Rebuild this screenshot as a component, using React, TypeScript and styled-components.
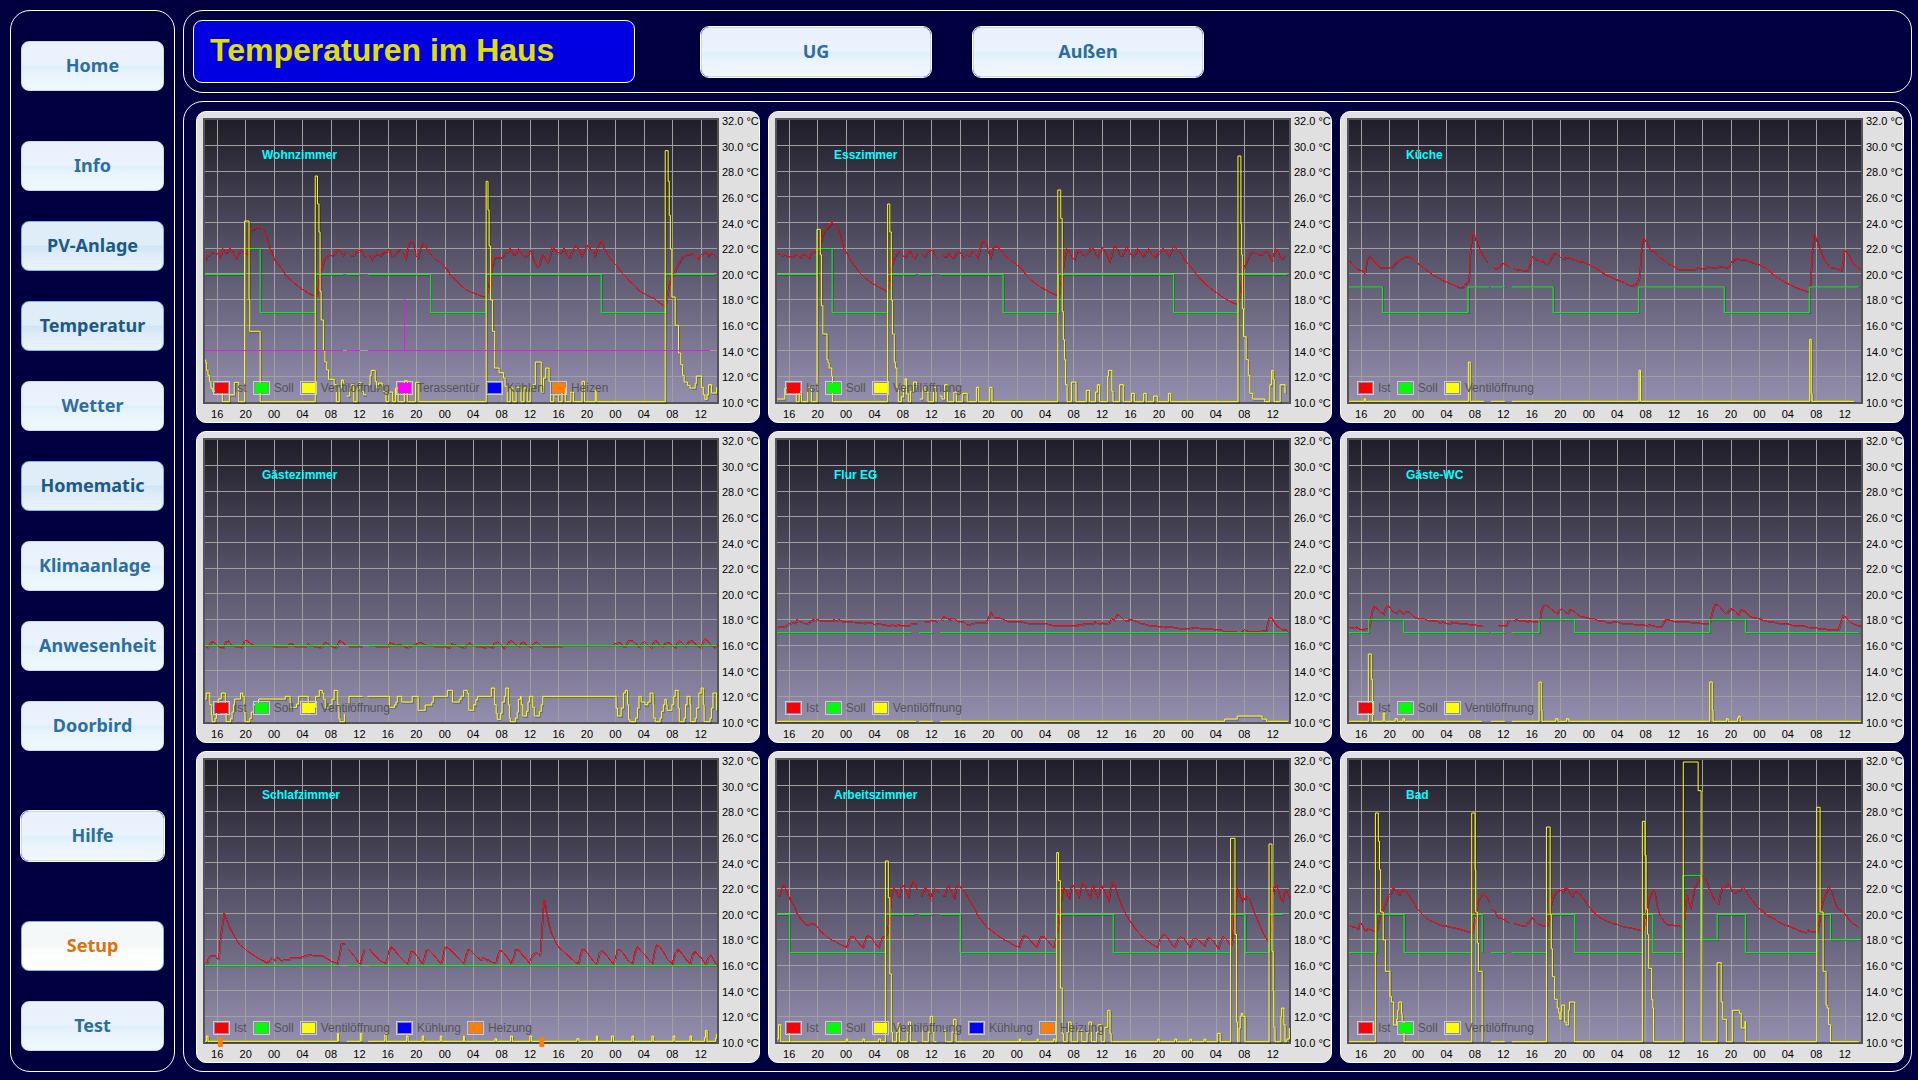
import React from 'react';
import styled, { createGlobalStyle, css } from 'styled-components';

const GlobalStyle = createGlobalStyle`
  *, *::before, *::after { box-sizing: border-box; }
  body {
    margin: 0;
    background: #000040;
    font-family: "Liberation Sans", Arial, sans-serif;
  }
`;

const Page = styled.div`
  display: grid;
  grid-template-columns: 165px minmax(0, 1fr);
  gap: 8px;
  min-height: 100vh;
  padding: 10px 6px 8px 10px;
`;

const frame = css`
  border: 1px solid #ffffff;
  border-radius: 20px;
`;

const Sidebar = styled.nav`
  ${frame}
  display: flex;
  flex-direction: column;
  gap: 60px;
  padding: 30px 10px 20px;
`;

const NavGroup = styled.div`
  display: flex;
  flex-direction: column;
  gap: 30px;

  &:first-child { margin-bottom: -10px; }
`;

const Main = styled.main`
  display: flex;
  flex-direction: column;
  gap: 8px;
  min-width: 0;
`;

const Header = styled.header`
  ${frame}
  display: flex;
  align-items: center;
  gap: 42px;
  padding: 9px;
`;

const Title = styled.h1`
  flex: 0 0 442px;
  height: 63px;
  margin: 0 24px 0 0;
  padding: 0 16px;
  border: 1px solid #ffffff;
  border-radius: 9px;
  background: #0000e0;
  color: #e0e000;
  font-size: 32px;
  font-weight: bold;
  line-height: 58px;
`;

type Tone = 'normal' | 'strong' | 'active';

const tones = {
  normal: css`
    border-color: #c5dbec;
    color: #2e6e9e;
    background: linear-gradient(#e9f2fc 0%, #eaf3fd 48%, #dfeffb 51%, #e8f4fd 66%, #eff7ff 100%);
  `,
  strong: css`
    border-color: #79b7e7;
    color: #1d5987;
    background: linear-gradient(#dfedf9 0%, #dfedf8 48%, #d0e5f3 51%, #deecf7 66%, #e9f2fa 100%);
  `,
  active: css`
    border-color: #79b7e7;
    color: #e17009;
    background: linear-gradient(#f5f8f9 0%, #f5f8f9 48%, #fbfdfd 60%, #ffffff 100%);
  `,
};

const NavButton = styled.a<{ $tone?: Tone; $outlined?: boolean; $wide?: boolean }>`
  display: block;
  width: ${(p) => (p.$wide ? '230px' : 'auto')};
  height: 50px;
  padding: 0 17px;
  border: 1px solid;
  border-radius: 8px;
  font-family: "Noto Sans", "Open Sans", sans-serif;
  font-size: 18px;
  font-weight: 700;
  line-height: 46px;
  text-align: center;
  text-decoration: none;
  white-space: nowrap;
  ${(p) => tones[p.$tone ?? 'normal']}
  ${(p) => p.$outlined && css`box-shadow: 0 0 0 1px #ffffff;`}
`;

const Board = styled.section`
  ${frame}
  display: grid;
  grid-template-columns: repeat(3, minmax(0, 1fr));
  gap: 8px;
  padding: 9px 7px 8px 12px;
`;

const Card = styled.figure`
  display: grid;
  grid-template-columns: minmax(0, 1fr) 40px;
  grid-template-rows: auto 18px;
  margin: 0;
  padding: 6px 0 0 6px;
  border: 1px solid #ffffff;
  border-radius: 10px;
  background: #e0e0e0;
  color: #000000;
  font-size: 11px;
`;

const Plot = styled.div`
  position: relative;
  height: 286px;
  border: 2px solid #545454;
  background: linear-gradient(#201e2a, #948eae);
`;

const Canvas = styled.svg`
  display: block;
  width: 100%;
  height: 100%;
  overflow: visible;
`;

const Grid = styled.path`
  fill: none;
  stroke: #a0a0a0;
  stroke-width: 1;
  shape-rendering: crispEdges;
  vector-effect: non-scaling-stroke;
`;

const Trace = styled.path<{ $color: string; $smooth?: boolean }>`
  fill: none;
  stroke: ${(p) => p.$color};
  stroke-width: 1;
  shape-rendering: ${(p) => (p.$smooth ? 'auto' : 'crispEdges')};
  vector-effect: non-scaling-stroke;
`;

const Room = styled.figcaption`
  position: absolute;
  top: 28px;
  left: 57px;
  color: #00ffff;
  font-size: 12px;
  font-weight: bold;
  line-height: 14px;
`;

const Legend = styled.ul`
  position: absolute;
  bottom: 7px;
  left: 8px;
  display: flex;
  gap: 6px;
  margin: 0;
  padding: 0;
  list-style: none;
  color: #545454;
  font-size: 12px;
  line-height: 14px;
`;

const LegendItem = styled.li`
  display: flex;
  gap: 4px;
`;

const Swatch = styled.span<{ $color: string }>`
  width: 17px;
  height: 14px;
  padding: 1px;
  border: 1px solid #cccccc;
  background: ${(p) => p.$color} content-box;
`;

const Degrees = styled.div`
  display: flex;
  flex-direction: column;
  justify-content: space-between;
  margin: -3px 0 -5px;
  padding-left: 3px;
  line-height: 12px;
  white-space: nowrap;
`;

const Hours = styled.div`
  display: grid;
  grid-template-columns: repeat(18, minmax(0, 1fr));
  padding: 4px 4px 0 0;
  line-height: 12px;
  text-align: center;
`;

/* Recorder units: 45 is 32 °C, 891 is 10 °C; a window of 72 h is `span` units wide. */
const TOP = 45;
const BOTTOM = 891;

const RED = '#f00810';
const GREEN = '#00ff10';
const YELLOW = '#ffff00';
const ORANGE = '#ff8000';

type Entry = [label: string, color: string];

const basicLegend: Entry[] = [
  ['Ist', '#ff0000'],
  ['Soll', '#00ff00'],
  ['Ventilöffnung', '#ffff00'],
];
const climateLegend: Entry[] = [...basicLegend, ['Kühlung', '#0000ff'], ['Heizung', ORANGE]];

interface RoomData {
  name: string;
  origin: number;
  span: number;
  legend: Entry[];
  ist: string;
  soll: string;
  valve: string;
  door?: string;
  heating?: number[];
}

const rooms: RoomData[] = [
  {
    name: 'Wohnzimmer',
    origin: 41,
    span: 1384,
    legend: [...basicLegend, ['Terassentür', '#ff00ff'], ['Kühlen', '#0000ff'], ['Heizen', ORANGE]],
    ist: 'M41 466L47 452 53 449 58 443 66 443 72 446 78 445 80 458 86 440 89 428 93 444 101 440 108 430 114 436 119 452 124 460 129 449 137 434 143 440 150 444 155 450 158 430 160 380 164 373 170 373 176 369 183 365 188 368 194 368 199 378 206 394 214 425 222 445 230 466 238 478 250 494 258 510 266 519 280 532 290 541 300 550 310 556 318 563 330 569 340 574 344 570 349 520 355 490 362 465 368 455 375 449 384 451 390 447 397 434 402 433 407 444 413 452 419 439M427 443L434 452 442 452 448 440 454 440 461 434 467 446 473 454M484 448L486 456 491 465 497 452 505 447 515 451 524 440 533 441 538 433 542 450 548 454 555 447 561 438 566 432 572 440 577 445 583 462 589 425 594 408 600 408 605 425 611 452 616 460 622 432 628 415 634 418 642 435 652 450 664 463 674 468 684 480 694 492 705 512 714 520 722 530 732 541 745 553 760 561 773 566 785 572 800 575 806 550 811 515 818 480 824 458 835 457 842 459 850 445 857 441 866 430 874 450 881 444 888 432 896 446 903 455 911 451 921 436 930 470 938 485 944 480 952 446 959 458 966 472 972 460 978 426 986 432 993 445 1002 442 1011 429 1018 452 1025 457 1033 440 1041 420 1050 432 1058 455 1064 440 1074 421 1081 430 1089 436 1094 452 1100 430 1107 410 1113 410 1119 430 1126 444 1135 459 1143 470 1154 482 1166 502 1178 515 1190 530 1201 540 1212 555 1225 564 1240 572 1255 580 1268 592 1285 604 1289 580 1294 545 1300 515 1308 505 1316 485 1324 468 1333 453 1343 448 1358 446 1366 453 1374 462 1381 450 1392 439 1399 453 1408 444 1414 446 1421 455',
    soll: 'M41 507H148V430H190V622H339V507H415M424 507H461M482 507H651V622H801V507H1112V622H1285V507H1419',
    valve:
      'M41 766H43V774H45V797H49V812H53V830H57V851H62V860H88V891H107V870H120V833H132V891H148V349H160V586H162V680H190V891H339V214H345V298H349V382H352V560H355V646H361V738H365V772H370V796H375V824H390V840H396V891H404V850H410V826H415V836H418M424 874H432V850H437V840H443V891H452V852H458V833H463V860H470V870H476M484 840H487V812H490V797H501V830H505V850H510V835H520V860H530V891H538V862H548V891H556V850H563V891H580V828H588V891H610V833H619V891H801V230H806V316H809V424H813V586H818V680H824V790H836V804H848V820H852V845H858V891H866V850H873V891H882V848H895V891H903V850H912V891H920V848H928V840H934V772H950V862H956V820H962V790H971V830H975V891H984V870H996V891H1006V850H1015V891H1030V862H1037V891H1060V830H1067V891H1096V856H1100V891H1285V138H1293V230H1296V332H1299V433H1303V577H1312V662H1321V745H1327V780H1332V812H1336V832H1345V842H1352V850H1366V836H1369V814H1383V848H1388V870H1392V884H1398V870H1402V840H1410V865H1424V848',
    door: 'M41 737H415M424 737H461M482 737H580V581V737H1406',
  },
  {
    name: 'Esszimmer',
    origin: 32,
    span: 1384,
    legend: basicLegend,
    ist: 'M32 445L38 446 44 451 52 449 60 453 68 453 74 456 80 446 86 450 94 457 100 448 106 447 112 454 118 460 124 442 132 440 142 440 147 430 151 405 156 388 162 374 170 364 180 353 188 355 195 372 203 395 210 425 220 445 230 466 242 484 252 499 262 511 274 522 286 532 298 540 312 548 330 560 335 530 339 490 345 468 352 450 362 438 369 446 376 458 384 446 391 436 397 450 403 461 411 443M421 446L426 452 432 454 438 440 446 434 452 436 458 452 465 460M477 446L483 454 489 455 496 442 502 456 508 459 516 442 526 440 534 457 542 448 550 453 558 438 566 445 573 458 579 435 584 409 590 408 597 414 603 440 609 457 614 432 624 422 632 430 643 444 652 456 662 465 675 474 688 486 698 499 708 514 718 524 730 534 742 545 755 552 770 561 782 567 793 573 798 540 803 500 808 460 815 432 822 442 828 457 835 462 842 440 849 437 856 448 864 451 872 442 880 427 886 430 893 452 898 456 904 440 911 427 918 440 924 455 930 471 936 446 943 422 950 428 957 451 964 453 970 438 977 426 984 440 993 455 1000 445 1006 431 1014 444 1020 454 1030 440 1036 432 1044 446 1052 456 1060 448 1067 438 1075 430 1082 438 1090 452 1097 438 1104 425 1112 430 1122 444 1132 463 1146 481 1160 500 1172 517 1184 530 1198 545 1210 555 1224 566 1238 577 1252 586 1264 593 1278 598 1283 570 1287 520 1292 488 1299 477 1304 460 1310 445 1318 440 1326 443 1334 450 1343 447 1352 438 1358 440 1364 458 1370 468 1375 445 1380 432 1386 440 1392 460 1398 461 1404 450',
    soll: 'M32 507H141V430H181V622H331V507H406M416 507H453M473 507H643V622H793V507H1104V622H1278V507H1411',
    valve:
      'M32 883H53V850H80V862H84V891H92V862H98V891H115V848H125V891H140V374H149V450H152V603H156V688H167V765H170V774H173V790H180V815H182V891H331V298H337V382H341V586H344V688H349V772H352V790H356V848H360V891H368V876H374V848H378V822H382V868H387V891H393V860H401V832H409V848M418 883H426V848H432V862H440V891H455V848H462V891M472 874H478V883H485V840H493V891H510V862H517V891H533V866H546V891H571V848H577V891H607V848H613V891H791V256H799V341H803V620H806V705H809V765H812V840H816V891H828V832H840V891H868V857H877V891H893V862H898V840H904V891H926V814H928V797H937V860H940V891H958V840H968V891H990V866H998V891H1023V866H1030V891H1050V874H1060V891H1090V866H1096V891H1278V154H1286V358H1288V450H1290V612H1293V696H1300V765H1306V812H1310V866H1318V883H1350V891H1364V840H1369V797H1373V824H1376V891H1392V840H1405V865',
  },
  {
    name: 'Küche',
    origin: 38,
    span: 1377,
    legend: basicLegend,
    ist: 'M38 467L46 477 54 487 62 493 70 496 76 498 80 505 83 485 86 462 92 452 97 456 102 466 110 475 120 487 130 489 150 488 157 480 165 472 175 462 184 457 192 453 202 456 212 464 222 475 236 486 250 498 264 510 278 518 290 526 304 532 318 539 330 545 339 549 347 543 355 532 360 528 363 450 367 400 370 383 374 387 379 405 386 425 394 445 402 460 409 471M424 485L432 491 440 487 448 477 455 475 460 479 467 485M479 489L486 493 494 492 500 495 518 495 522 485 527 466 532 454 538 462 546 463 553 470 557 466 563 474 570 478 576 470 583 453 590 445 598 446 606 457 612 461 620 458 630 458 642 464 652 468 664 469 676 474 690 482 704 491 718 503 732 511 746 518 760 525 775 530 788 539 800 542 810 536 817 524 820 500 823 440 827 402 831 398 836 409 842 422 850 437 857 438 864 447 873 457 884 464 895 475 906 482 916 487 926 495 940 493 952 494 966 495 974 486 982 490 992 491 1003 485 1014 487 1030 486 1042 484 1050 488 1060 485 1066 472 1073 463 1082 461 1092 463 1106 464 1118 470 1132 476 1144 480 1156 487 1168 497 1180 510 1192 519 1206 529 1220 537 1234 544 1250 552 1268 558 1277 558 1280 500 1284 420 1288 388 1292 391 1298 415 1306 440 1315 463 1324 477 1332 487 1344 489 1362 496 1366 470 1369 440 1373 438 1379 446 1386 461 1395 477 1404 486 1415 494',
    soll: 'M38 545H128V622H358V545H415M420 545H457M476 545H587V622H817V545H1047V622H1276V545H1409',
    valve: 'M38 890H79V882H82V890H359V772H364V890H401M420 890H457M476 890H818V797H822V890H1277V704H1281V866H1283V890H1396',
  },
  {
    name: 'Gästezimmer',
    origin: 41,
    span: 1384,
    legend: basicLegend,
    ist: 'M41 665L48 668 54 655 61 649 68 654 76 662 84 669 91 666 97 650 104 648 111 658 120 663 132 664 140 668 146 650 152 645 160 652 168 658 180 662 262 664 270 656 278 657 284 664 314 663 320 656 328 662 352 667 358 663 364 652 370 652 376 660 384 664 392 668 398 660 402 650 407 646 413 652 419 658M427 664H465M500 664H536L540 653 548 656 560 661 566 657 574 661 584 668 598 663 612 658 618 652 626 653 634 658 644 662 692 666 702 669 708 656 716 658 726 664 740 668 748 660 756 654 764 660 776 666 786 664 796 668 806 664 818 668 822 656 832 650 840 658 848 669 856 662 862 650 870 646 878 656 890 665 896 654 902 650 910 660 922 667 930 654 938 650 948 662 960 665 980 666 1000 665 1010 661 1050 663 1080 662 1144 661 1148 655 1164 653 1170 664 1178 665 1184 648 1196 646 1206 656 1214 667 1222 654 1230 650 1238 660 1246 668 1254 652 1260 646 1268 658 1276 664 1286 654 1296 653 1302 660 1312 668 1318 652 1324 646 1332 656 1340 663 1348 650 1358 646 1366 656 1374 665 1381 670 1388 646 1394 641 1402 652 1410 662 1417 668 1424 658',
    soll: 'M41 661H402M424 661H465M482 661H1424',
    valve:
      'M41 823H44V805H54V840H58V870H60V891H68V881H72V862H78V822H85V805H96V840H98V891H110V882H114V862H118V840H121V823H137V805H143V815H147V862H149V891H162V881H166V862H172V840H186V823H258V815H271V848H288V838H294V815H320V840H326V862H333V848H340V815H350V797H358V805H362V824H366V850H378V840H384V824H390V797H400V840H403V882H406V891H418V868M427 840H430V815H467M480 815H540V848H553V840H557V832H561V815H573V832H601V815H617V857H636V841H654V832H658V815H696V797H710V832H728V824H733V815H740V797H750V806H754V857H767V840H773V825H778V815H815V790H824V840H828V866H831V884H840V865H844V832H850V815H854V790H861V840H864V880H866V891H880V880H885V862H888V824H894V815H896V840H900V874H910V860H914V832H918V815H927V848H931V874H945V860H950V840H954V815H1152V850H1156V874H1166V850H1172V805H1177V797H1183V840H1186V885H1189V891H1205V880H1210V850H1214V815H1220V832H1230V840H1238V832H1244V805H1252V840H1254V880H1258V891H1271V880H1275V860H1280V840H1284V824H1288V840H1290V857H1303V840H1308V815H1312V797H1320V850H1323V891H1336V880H1340V840H1344V815H1352V840H1354V891H1366V880H1370V850H1376V805H1382V790H1388V840H1390V891H1406V880H1410V850H1414V805H1424V857',
  },
  {
    name: 'Flur EG',
    origin: 32,
    span: 1384,
    legend: basicLegend,
    ist: 'M32 607L38 604 44 604 50 606 56 602 64 596 72 593 81 594 86 583 93 590 100 591 106 595 116 594 124 588 130 583 136 586 142 583 150 587 182 588 186 583 192 588 200 583 206 588 230 588 238 591 262 592 266 595 274 592 286 592 296 598 304 595 322 599 334 602 342 599 352 602 360 598 366 602 390 601 397 595 411 595M430 588L440 590 448 587 458 587 465 590M477 585L482 575 490 577 498 584 504 580 514 582 520 590 536 590 546 600 560 596 570 591 596 594 602 582 609 560 614 570 620 578 628 577 638 580 644 583 654 588 676 588 688 590 698 591 710 595 746 596 754 595 770 598 782 602 840 602 846 599 856 600 864 594 886 595 892 589 900 596 912 594 922 597 930 592 936 580 944 585 950 568 956 569 962 577 970 585 982 585 990 583 1002 588 1012 594 1022 595 1034 600 1052 600 1058 603 1074 603 1080 607 1088 603 1102 606 1122 610 1150 610 1156 607 1180 610 1192 612 1206 610 1214 613 1230 613 1238 618 1268 618 1276 622 1286 621 1296 614 1304 618 1340 618 1346 615 1354 616 1358 592 1363 576 1369 577 1374 590 1382 600 1390 608 1398 614 1408 614 1411 617',
    soll: 'M32 622H395M416 622H453M473 622H1413',
    valve: 'M32 890H408M416 890H453M473 890H1242V883H1276V874H1343V883H1355V890H1413',
  },
  {
    name: 'Gäste-WC',
    origin: 38,
    span: 1377,
    legend: basicLegend,
    ist: 'M38 607L46 606 52 610 58 606 66 612 76 614 84 610 90 612 95 590 100 555 105 545 112 549 120 560 130 567 137 547 143 541 149 550 156 559 165 564 170 557 178 558 183 566 190 560 198 560 206 569 214 576 224 580 238 580 246 583 250 588 272 586 280 592 290 590 300 595 308 596 314 591 326 592 334 596 352 595 362 598 374 599 388 602 397 602M438 602H461L466 588 470 584M480 588L488 583 498 587 510 586 516 591 524 586 532 591 540 588 550 591 554 560 558 545 565 537 572 543 580 550 590 560 597 565 602 555 610 551 617 559 626 566 632 552 640 556 650 566 660 574 672 576 684 579 696 580 708 586 722 587 732 592 760 590 772 595 798 596 808 599 832 599 838 602 846 599 862 603 878 603 884 590 892 583 904 586 914 590 922 588 934 590 952 590 960 594 974 592 984 595 996 597 1008 594 1012 570 1018 545 1024 536 1031 540 1040 553 1050 565 1057 560 1064 551 1074 555 1084 569 1092 553 1102 558 1112 570 1124 577 1140 580 1154 586 1170 590 1182 591 1196 595 1220 597 1236 602 1256 600 1272 606 1292 607 1302 611 1322 612 1330 615 1354 614 1360 590 1367 570 1374 577 1384 590 1396 597 1406 601 1415 603',
    soll: 'M38 622H91V583H185V622H415M420 622H457M476 622H549V583H645V622H1008V583H1104V622H1409',
    valve:
      'M38 890H90V688H98V764H101V890H130V865H134V890H162V882H168V890H183V882H187V890H395M420 890H457M476 890H549V772H555V857H557V890H594V882H600V890H623V882H629V890H1008V772H1015V857H1017V890H1053V882H1058V890H1083V880H1086V874H1090V890H1415',
  },
  {
    name: 'Schlafzimmer',
    origin: 41,
    span: 1384,
    legend: climateLegend,
    ist: 'M41 652L46 655 51 636 60 630 68 630 74 642 78 640 80 600 85 550 92 503 97 520 104 540 112 558 122 578 132 596 143 606 154 617 168 627 180 636 192 644 206 652 214 650 220 637 228 646 234 637 240 637 244 646 270 643 274 637 300 637 312 631 324 629 346 633 358 632 370 640 382 648 392 652 398 655 404 630 409 594 414 595 419 597M428 612L436 622 446 636 456 654 461 655 466 630 472 611M484 611L492 622 502 633 512 645 522 651 529 655 534 640 539 612 545 606 552 614 562 629 572 641 584 654 589 655 593 635 599 616 606 622 616 636 628 656 633 640 638 616 646 614 656 626 668 642 678 656 683 640 688 608 694 606 704 614 716 628 728 642 740 655 746 630 752 612 760 617 770 630 780 639 786 645 790 638 798 640 802 646 806 642 812 650 827 653 832 630 838 615 846 620 856 634 868 655 875 635 880 612 886 612 896 626 908 640 918 655 924 632 930 625 938 623 946 632 950 570 954 490 958 461 962 495 968 530 976 562 986 587 998 608 1012 621 1026 636 1040 650 1050 655 1056 625 1061 610 1070 618 1082 636 1094 654 1100 655 1106 625 1114 615 1124 628 1134 642 1144 656 1150 640 1155 613 1162 613 1172 626 1184 646 1196 655 1203 620 1210 605 1218 616 1230 630 1242 647 1250 655 1256 615 1262 600 1270 604 1280 622 1290 642 1304 656 1311 625 1320 612 1330 626 1342 645 1352 655 1358 628 1366 619 1374 630 1382 638 1394 658 1400 640 1408 630 1414 642 1424 660',
    soll: 'M41 661H402M424 661H463M482 661H1424',
    valve:
      'M41 890H45V874H49V890H399V866H402V890H402M424 890H461V866H465V890H465M482 890H527V866H531V890H586V874H590V890H628V874H632V890H677V874H681V890H740V874H742V890H825V882H829V890H867V874H872V890H919V874H924V890H1046V882H1052V890H1099V874H1102V890H1140V874H1145V890H1195V874H1199V890H1249V874H1253V890H1306V874H1311V890H1352V874H1356V890H1391V878H1394V857H1398V890H1421V880H1424V868',
    heating: [82, 951],
  },
  {
    name: 'Arbeitszimmer',
    origin: 32,
    span: 1384,
    legend: climateLegend,
    ist: 'M32 453L38 452 43 430 48 418 54 430 62 452 70 470 78 484 86 505 94 520 102 530 110 538 120 537 133 535 140 545 148 556 158 567 168 576 178 584 188 588 198 595 208 600 220 606 226 585 231 576 240 575 248 588 256 598 264 607 271 580 278 571 286 576 295 592 306 607 312 590 318 575 325 575 330 560 336 500 341 445 347 430 352 434 357 453 362 456 367 425 373 420 380 440 387 456 392 420 397 409 403 412 410 434M420 454L426 438 432 426 439 438 446 464 452 440 457 430 462 434 467 440M478 453L485 450 490 428 495 421 502 440 510 460 515 430 519 418 526 424 536 437 546 455 556 474 566 492 574 512 584 525 594 540 604 550 618 562 632 574 646 584 660 592 672 600 686 605 692 585 698 572 706 573 716 586 726 598 734 606 740 585 746 573 754 575 764 588 774 602 781 606 789 560 796 500 801 450 806 427 811 432 816 452 821 460 826 425 831 418 838 434 847 457 852 430 857 413 864 420 870 442 877 460 882 430 887 422 893 448 898 457 904 432 909 421 916 438 928 468 933 430 938 410 944 420 950 446 958 468 968 495 978 515 988 531 998 548 1010 564 1022 578 1034 588 1046 598 1060 606 1066 585 1072 570 1080 568 1090 582 1100 600 1107 606 1114 585 1122 575 1132 580 1140 594 1148 607 1156 582 1164 580 1174 588 1186 603 1192 585 1200 578 1210 586 1224 610 1230 590 1238 574 1246 582 1254 597 1261 600 1266 540 1270 470 1277 433 1282 450 1288 468 1292 457 1296 462 1302 452 1308 460 1314 480 1322 505 1330 524 1340 550 1350 575 1362 590 1367 530 1371 450 1376 425 1381 420 1386 434 1392 460 1398 468 1402 442 1407 434 1412 450 1417 456',
    soll: 'M32 507H66V622H325V507H403M416 507H453M473 507H527V622H787V507H941V622H1258V507H1297V622H1362V507H1399',
    valve:
      'M32 883H36V840H42V891H66V840H66V891H219V883H223V891H264V883H268V891H306V883H312V891H325V349H333V459H337V688H341V862H344V891H355V862H359V835H363V891H384V862H387V832H393V891H411M424 850H426V891H441V862H446V815H453V862H456V891H463M479 857H488V891H505V862H509V824H516V891H687V883H690V891H735V883H738V891H779V883H784V891H788V324H793V408H798V730H803V866H806V891H816V862H820V832H827V891H845V857H856V891H870V862H875V832H882V891H896V862H900V840H908V891H918V848H926V797H932V866H935V891H1061V883H1065V891H1107V883H1112V891H1148V883H1152V891H1186V883H1191V891H1222V866H1230V891H1258V281H1270V569H1274V832H1277V891H1281V850H1284V815H1287V806H1291V815H1297V891H1362V298H1370V620H1373V739H1375V848H1378V891H1394V815H1396V790H1402V840H1405V891H1410V883H1417V850',
  },
  {
    name: 'Bad',
    origin: 38,
    span: 1377,
    legend: basicLegend,
    ist: 'M38 541L46 545 54 546 62 552 65 536 70 533 75 545 80 556 90 551 100 555 108 556 112 563 117 530 122 505 130 490 138 465 146 450 152 440 158 427 164 436 172 449 180 433 190 438 198 450 208 468 218 487 228 500 240 514 254 525 268 532 284 540 300 543 316 547 330 550 346 556 358 560 370 562 375 530 380 492 385 466 391 454 400 445 407 455 415 472M421 492L430 498 436 516 446 519 456 525 467 532M479 536L490 537 502 542 514 540 520 531 530 517 538 529 548 537 560 541 570 546 574 520 580 480 586 455 594 440 604 433 612 443 618 430 625 429 630 446 636 454 643 441 652 440 660 450 670 465 682 484 694 500 706 512 718 521 732 528 746 534 758 537 772 543 786 546 802 550 815 553 828 557 833 530 838 495 844 460 850 442 857 433 861 450 866 485 874 512 884 528 892 538 904 537 914 542 926 541 936 550 940 510 943 470 946 448 950 470 956 487 961 460 966 430 972 414 980 402 988 394 996 402 1004 425 1012 446 1020 466 1030 476 1036 445 1041 427 1048 428 1056 413 1062 420 1068 440 1076 443 1084 436 1090 435 1096 425 1104 433 1112 452 1124 469 1136 488 1146 494 1156 505 1166 513 1178 518 1190 528 1206 537 1220 543 1236 550 1252 558 1266 562 1274 555 1282 560 1297 560 1302 530 1307 490 1314 460 1322 435 1328 426 1336 442 1344 472 1350 488 1360 495 1370 505 1380 520 1390 533 1406 544',
    soll: 'M38 622H111V507H186V622H368V507H396V620M420 622H457M476 622H569V507H645V622H827V507H855V622H936V391H985V583H1028V507H1104V622H1296V507H1333V583H1411',
    valve:
      'M38 891H109V205H117V290H120V375H123V502H130V586H136V680H148V755H152V772H158V841H166V824H169V797H172V772H179V806H181V832H186V891H368V205H377V375H379V502H383V595H386V680H396V891M420 891H457M476 891H569V247H579V510H582V612H585V696H591V764H598V790H602V805H605V824H608V800H610V781H618V832H622V841H628V797H631V772H645V891H827V230H834V332H837V493H841V569H844V671H852V765H855V790H857V891H937V52H977V138H985V891H1028V654H1039V772H1043V824H1053V891H1069V797H1088V806H1093V850H1103V830H1104V891H1296V188H1305V502H1313V680H1321V781H1324V790H1328V840H1333V891H1409',
  },
];

const degrees = Array.from({ length: 12 }, (_, i) => `${32 - 2 * i}.0 °C`);
const hours = Array.from({ length: 18 }, (_, i) => String((16 + 4 * i) % 24).padStart(2, '0'));

function gridPath(origin: number, span: number): string {
  const stepX = span / 18;
  const stepY = (BOTTOM - TOP) / 11;
  const columns = hours.map((_, i) => `M${origin + stepX * (i + 0.44)} ${TOP}V${BOTTOM}`);
  const rows = Array.from({ length: 10 }, (_, i) => `M${origin} ${TOP + stepY * (i + 1)}h${span}`);
  return columns.concat(rows).join('');
}

function Chart({ room }: { room: RoomData }) {
  return (
    <Card>
      <Plot>
        <Canvas viewBox={`${room.origin} ${TOP} ${room.span} ${BOTTOM - TOP}`} preserveAspectRatio="none" aria-hidden="true">
          <Grid d={gridPath(room.origin, room.span)} />
          <g transform="translate(3 3)" opacity="0.2">
            <Trace $color="#000000" d={room.ist} />
            <Trace $color="#000000" d={room.soll} />
            <Trace $color="#000000" d={room.valve} />
          </g>
          <Trace $color={RED} d={room.ist} />
          <g transform="translate(0 1)">
            <Trace $color={GREEN} $smooth d={room.soll} />
          </g>
          <g transform="translate(0 -1)">
            <Trace $color={YELLOW} $smooth d={room.valve} />
          </g>
          {room.door && <Trace $color="#f010f0" d={room.door} />}
          {room.heating?.map((x) => (
            <rect key={x} x={x - 6} y={BOTTOM - 15} width={13} height={30} fill={ORANGE} />
          ))}
        </Canvas>
        <Room>{room.name}</Room>
        <Legend>
          {room.legend.map(([label, color]) => (
            <LegendItem key={label}>
              <Swatch $color={color} />
              {label}
            </LegendItem>
          ))}
        </Legend>
      </Plot>
      <Degrees>
        {degrees.map((d) => (
          <span key={d}>{d}</span>
        ))}
      </Degrees>
      <Hours>
        {hours.map((h, i) => (
          <span key={i}>{h}</span>
        ))}
      </Hours>
    </Card>
  );
}

interface Link {
  label: string;
  tone?: Tone;
  outlined?: boolean;
}

const navigation: Link[][] = [
  [{ label: 'Home' }],
  [
    { label: 'Info' },
    { label: 'PV-Anlage', tone: 'strong' },
    { label: 'Temperatur', tone: 'strong' },
    { label: 'Wetter' },
    { label: 'Homematic', tone: 'strong' },
    { label: 'Klimaanlage' },
    { label: 'Anwesenheit' },
    { label: 'Doorbird' },
  ],
  [{ label: 'Hilfe', outlined: true }],
  [{ label: 'Setup', tone: 'active' }, { label: 'Test' }],
];

export default function App() {
  return (
    <>
      <GlobalStyle />
      <Page>
        <Sidebar>
          {navigation.map((group) => (
            <NavGroup key={group[0].label}>
              {group.map(({ label, tone, outlined }) => (
                <NavButton key={label} href={`#${label}`} $tone={tone} $outlined={outlined}>
                  {label}
                </NavButton>
              ))}
            </NavGroup>
          ))}
        </Sidebar>
        <Main>
          <Header>
            <Title>Temperaturen im Haus</Title>
            <NavButton href="#UG" $wide $outlined>
              UG
            </NavButton>
            <NavButton href="#Aussen" $wide $outlined>
              Außen
            </NavButton>
          </Header>
          <Board>
            {rooms.map((room) => (
              <Chart key={room.name} room={room} />
            ))}
          </Board>
        </Main>
      </Page>
    </>
  );
}
